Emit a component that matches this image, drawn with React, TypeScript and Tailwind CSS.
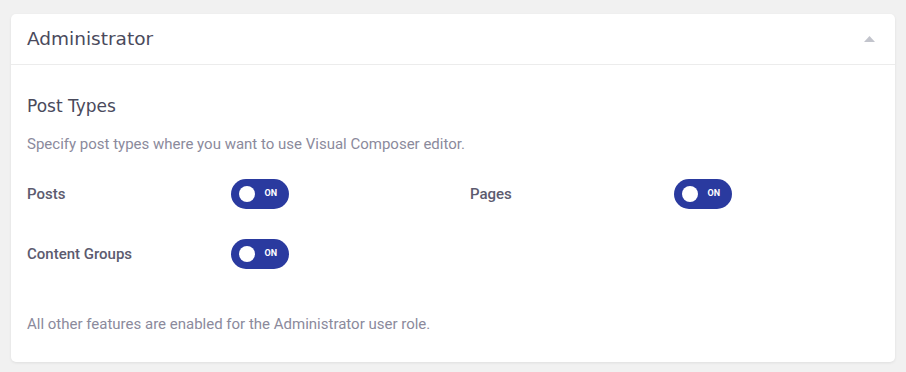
import React from "react";

function Toggle() {
  return (
    <div className="flex h-[30px] w-[58px] items-center rounded-full bg-[#2a3a9f] pl-2 pr-3">
      <span className="h-4 w-4 rounded-full bg-white" />
      <span className="ml-auto font-['Roboto',sans-serif] text-[9px] font-bold text-white">ON</span>
    </div>
  );
}

function Row({ label }: { label: string }) {
  return (
    <div className="flex h-[30px] items-center">
      <span className="w-[204px] text-[15px] font-medium text-[#5c5b6f]">{label}</span>
      <Toggle />
    </div>
  );
}

export default function App() {
  return (
    <main className="min-h-[372px] bg-[#f1f1f1] px-[11px] pt-[14px] font-['Roboto',sans-serif]">
      <div className="overflow-hidden rounded-[5px] bg-white shadow-[0_1px_3px_rgba(0,0,0,0.08)]">
        <header className="flex h-[51px] items-center justify-between border-b border-[#ececec] px-4">
          <h2 className="font-['DejaVu_Sans',sans-serif] text-[18.5px] font-medium text-[#4a4a5c]">Administrator</h2>
          <svg width="11" height="6" viewBox="0 0 11 6" className="mr-[4px]">
            <path d="M5.5 0 L11 6 H0 Z" fill="#c2c4cc" />
          </svg>
        </header>
        <div className="px-4 pb-[28px] pt-[31px]">
          <h3 className="font-['DejaVu_Sans',sans-serif] text-[17px] font-medium leading-[20px] text-[#4a4a5c]">Post Types</h3>
          <p className="mt-[18px] text-[15px] leading-[20px] text-[#8b8a9c]">
            Specify post types where you want to use Visual Composer editor.
          </p>
          <div className="mt-[25px] grid grid-cols-[443px_1fr] gap-y-[30px]">
            <Row label="Posts" />
            <Row label="Pages" />
            <Row label="Content Groups" />
          </div>
          <p className="mt-[45px] text-[15px] leading-[20px] text-[#8b8a9c]">
            All other features are enabled for the Administrator user role.
          </p>
        </div>
      </div>
    </main>
  );
}
